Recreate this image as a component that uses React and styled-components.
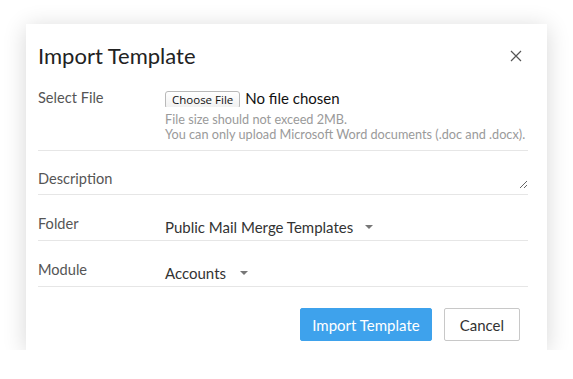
import React from 'react';
import styled, { createGlobalStyle } from 'styled-components';

const GlobalStyle = createGlobalStyle`
  html, body {
    margin: 0;
    background: #ffffff;
    font-family: Lato, "Open Sans", "Liberation Sans", sans-serif;
  }
`;

const Page = styled.div`
  padding: 24px 0 0 26px;
`;

const Dialog = styled.div`
  width: 521px;
  height: 326px;
  box-sizing: border-box;
  background: #ffffff;
  box-shadow: 0 3px 22px rgba(0, 0, 0, 0.16);
  padding: 18px 19px 8px 12px;
  display: flex;
  flex-direction: column;
`;

const Header = styled.div`
  display: flex;
  align-items: center;
  justify-content: space-between;
  height: 28px;
`;

const Title = styled.h2`
  margin: 0;
  font-size: 22px;
  font-weight: 400;
  line-height: 28px;
  color: #222;
`;

const CloseButton = styled.button`
  border: none;
  background: none;
  padding: 0;
  margin-right: 6px;
  width: 12px;
  height: 12px;
  display: flex;
  cursor: pointer;
`;

const Row = styled.div`
  display: flex;
  align-items: flex-start;
  padding: ${(p) => p.$pad || '19px 0 8px'};
  border-bottom: 1px solid #e6e6e6;
`;

const Label = styled.div`
  width: 127px;
  flex-shrink: 0;
  padding-top: ${(p) => p.$top || 0}px;
  font-size: 14.6px;
  line-height: 18px;
  color: #555;
`;

const Field = styled.div`
  flex: 1;
  display: flex;
  flex-direction: column;
`;

const FileInput = styled.input`
  font-family: Lato, "Open Sans", "Liberation Sans", sans-serif;
  font-size: 15px;
  color: #111;
  height: 18px;
  line-height: 18px;

  &::file-selector-button {
    font-family: "Open Sans", "Liberation Sans", sans-serif;
    font-size: 11.5px;
    height: 18px;
    padding: 0 6px;
    margin-right: 5px;
    color: #111;
    background: linear-gradient(#ffffff, #f0f0f0);
    border: 1px solid #b9b9b9;
    border-radius: 3px;
  }
`;

const Hints = styled.div`
  margin-top: 5px;
  font-size: 12.7px;
  line-height: 15px;
  color: #9a9a9a;
  white-space: nowrap;
`;

const TextArea = styled.textarea`
  flex: 1;
  height: 38px;
  box-sizing: border-box;
  padding: 0;
  margin: 0;
  border: none;
  outline: none;
  resize: vertical;
  font-family: inherit;
  font-size: 14px;
`;

const Select = styled.div`
  display: flex;
  align-items: center;
  gap: ${(p) => p.$gap || 12}px;
  font-size: 15px;
  line-height: 18px;
  color: #333;
  margin: 3px 0 -3px;
`;

const Caret = styled.span`
  width: 0;
  height: 0;
  border-left: 4px solid transparent;
  border-right: 4px solid transparent;
  border-top: 4px solid #777;
`;

const Footer = styled.div`
  display: flex;
  justify-content: flex-end;
  gap: 12px;
  padding: 21px 8px 0 0;
`;

const Button = styled.button`
  height: 33px;
  padding: 0 ${(p) => (p.$primary ? 11 : 15)}px;
  font-family: inherit;
  font-size: 15px;
  border-radius: 2px;
  cursor: pointer;
  color: ${(p) => (p.$primary ? '#ffffff' : '#333')};
  background: ${(p) => (p.$primary ? '#3ea2ec' : '#ffffff')};
  border: 1px solid ${(p) => (p.$primary ? '#3ea2ec' : '#c8c8c8')};
`;

export default function App() {
  return (
    <>
      <GlobalStyle />
      <Page>
        <Dialog>
          <Header>
            <Title>Import Template</Title>
            <CloseButton aria-label="Close">
              <svg width="12" height="12" viewBox="0 0 12 12">
                <path d="M1 1L11 11M11 1L1 11" stroke="#555" strokeWidth="1.2" />
              </svg>
            </CloseButton>
          </Header>
          <Row>
            <Label>Select File</Label>
            <Field>
              <FileInput type="file" accept=".doc,.docx" />
              <Hints>
                File size should not exceed 2MB.
                <br />
                You can only upload Microsoft Word documents (.doc and .docx).
              </Hints>
            </Field>
          </Row>
          <Row $pad="0 0 5px">
            <Label $top={19}>Description</Label>
            <TextArea />
          </Row>
          <Row $pad="20px 0 7px">
            <Label>Folder</Label>
            <Select>
              Public Mail Merge Templates
              <Caret />
            </Select>
          </Row>
          <Row $pad="20px 0 7px">
            <Label>Module</Label>
            <Select $gap={14}>
              Accounts
              <Caret />
            </Select>
          </Row>
          <Footer>
            <Button $primary>Import Template</Button>
            <Button>Cancel</Button>
          </Footer>
        </Dialog>
      </Page>
    </>
  );
}
